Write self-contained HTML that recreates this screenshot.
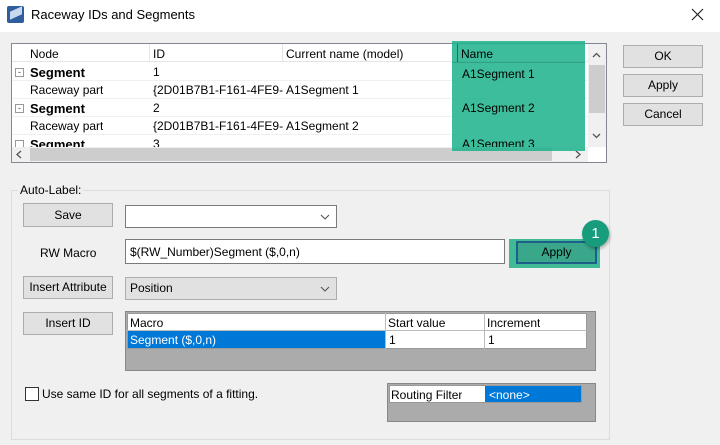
<!DOCTYPE html><html><head><meta charset="utf-8"><style>
*{box-sizing:border-box;margin:0;padding:0}
body{width:720px;height:445px;background:#f0f0f0;font-family:"Liberation Sans",sans-serif;font-size:12px;color:#000;position:relative;overflow:hidden}
.a{position:absolute}
.btn{position:absolute;background:#e1e1e1;border:1px solid #adadad;text-align:center;font-size:12px}
.cb{position:absolute;background:#e1e1e1;border:1px solid #adadad;padding-left:4px}
.cell{position:absolute;white-space:nowrap;overflow:hidden}
</style></head><body>
<div class="a" style="left:0;top:0;width:720px;height:32px;background:#fff"></div>
<div class="a" style="left:7px;top:6px;width:17px;height:17px;background:#2f5d9e;border-radius:2px"></div>
<div class="a" style="left:10px;top:9px;width:12px;height:8px;background:#c8d8ee;transform:skewY(-25deg)"></div>
<div class="a" style="left:31px;top:7px;font-size:13px">Raceway IDs and Segments</div>
<svg class="a" style="left:691px;top:8px" width="13" height="13"><path d="M1 1L12 12M12 1L1 12" stroke="#222" stroke-width="1.2"/></svg>

<!-- tree -->
<div class="a" style="left:11px;top:43px;width:596px;height:120px;background:#fff;border:1px solid #828790"></div>
<div class="a" style="left:12px;top:44px;width:576px;height:18px;background:#fff;border-bottom:1px solid #e5e5e5"></div>
<div class="cell" style="left:30px;top:47px">Node</div>
<div class="a" style="left:149px;top:44px;width:1px;height:18px;background:#e5e5e5"></div>
<div class="cell" style="left:153px;top:47px">ID</div>
<div class="a" style="left:282px;top:44px;width:1px;height:18px;background:#e5e5e5"></div>
<div class="cell" style="left:286px;top:47px">Current name (model)</div>

<div class="a" style="left:12px;top:80px;width:576px;height:1px;background:#f0f0f0"></div>
<div class="a" style="left:12px;top:98px;width:576px;height:1px;background:#f0f0f0"></div>
<div class="a" style="left:12px;top:116px;width:576px;height:1px;background:#f0f0f0"></div>
<div class="a" style="left:12px;top:134px;width:576px;height:1px;background:#f0f0f0"></div>

<div class="a" style="left:15px;top:68px;width:9px;height:9px;border:1px solid #999;font-size:9px;line-height:6px;text-align:center;color:#444">-</div>
<div class="cell" style="left:30px;top:65px;font-weight:bold;font-size:13px">Segment</div>
<div class="cell" style="left:153px;top:65px">1</div>
<div class="cell" style="left:30px;top:83px">Raceway part</div>
<div class="cell" style="left:153px;top:83px;width:130px">{2D01B7B1-F161-4FE9-</div>
<div class="cell" style="left:286px;top:83px">A1Segment 1</div>
<div class="a" style="left:15px;top:104px;width:9px;height:9px;border:1px solid #999;font-size:9px;line-height:6px;text-align:center;color:#444">-</div>
<div class="cell" style="left:30px;top:101px;font-weight:bold;font-size:13px">Segment</div>
<div class="cell" style="left:153px;top:101px">2</div>
<div class="cell" style="left:30px;top:119px">Raceway part</div>
<div class="cell" style="left:153px;top:119px;width:130px">{2D01B7B1-F161-4FE9-</div>
<div class="cell" style="left:286px;top:119px">A1Segment 2</div>
<div class="a" style="left:12px;top:136px;width:440px;height:11px;overflow:hidden">
 <div class="a" style="left:3px;top:4px;width:9px;height:9px;border:1px solid #999"></div>
 <div class="cell" style="left:18px;top:1px;font-weight:bold;font-size:13px">Segment</div>
 <div class="cell" style="left:141px;top:1px">3</div>
</div>
<!-- scrollbars -->
<div class="a" style="left:12px;top:147px;width:576px;height:15px;background:#f0f0f0"></div>
<div class="a" style="left:30px;top:148px;width:522px;height:13px;background:#cdcdcd"></div>
<svg class="a" style="left:15px;top:150px" width="8" height="9"><path d="M6 1L2 4.5L6 8" fill="none" stroke="#555" stroke-width="1.3"/></svg>
<svg class="a" style="left:574px;top:150px" width="8" height="9"><path d="M2 1L6 4.5L2 8" fill="none" stroke="#555" stroke-width="1.3"/></svg>
<div class="a" style="left:588px;top:44px;width:18px;height:103px;background:#f0f0f0"></div>
<div class="a" style="left:589px;top:65px;width:16px;height:48px;background:#cdcdcd"></div>
<svg class="a" style="left:592px;top:52px" width="9" height="6"><path d="M1 5L4.5 1.5L8 5" fill="none" stroke="#555" stroke-width="1.3"/></svg>
<svg class="a" style="left:592px;top:133px" width="9" height="6"><path d="M1 1L4.5 4.5L8 1" fill="none" stroke="#555" stroke-width="1.3"/></svg>
<!-- green overlay -->
<div class="a" style="left:452px;top:41px;width:133px;height:110px;background:rgba(27,177,137,0.85)"></div>
<div class="cell" style="left:461px;top:47px">Name</div>
<div class="a" style="left:457px;top:44px;width:1px;height:18px;background:#555"></div>
<div class="a" style="left:452px;top:62px;width:133px;height:1px;background:rgba(0,0,0,0.15)"></div>
<div class="cell" style="left:462px;top:67px">A1Segment 1</div>
<div class="cell" style="left:462px;top:101px">A1Segment 2</div>
<div class="a" style="left:452px;top:136px;width:133px;height:11px;overflow:hidden"><div class="cell" style="left:10px;top:1px">A1Segment 3</div></div>

<div class="btn" style="left:623px;top:45px;width:80px;height:23px;line-height:21px">OK</div>
<div class="btn" style="left:623px;top:74px;width:80px;height:23px;line-height:21px">Apply</div>
<div class="btn" style="left:623px;top:103px;width:80px;height:23px;line-height:21px">Cancel</div>

<!-- group -->
<div class="a" style="left:11px;top:190px;width:599px;height:250px;border:1px solid #dcdcdc"></div>
<div class="a" style="left:18px;top:183px;background:#f0f0f0;padding:0 2px">Auto-Label:</div>
<div class="btn" style="left:23px;top:203px;width:90px;height:24px;line-height:22px">Save</div>
<div class="a" style="left:125px;top:205px;width:212px;height:23px;background:#fff;border:1px solid #7a7a7a"></div>
<svg class="a" style="left:320px;top:214px" width="10" height="6"><path d="M1 1L5 5L9 1" fill="none" stroke="#555" stroke-width="1.1"/></svg>
<div class="a" style="left:40px;top:246px">RW Macro</div>
<div class="a" style="left:125px;top:239px;width:380px;height:25px;background:#fff;border:1px solid #7a7a7a;padding:5px 4px">$(RW_Number)Segment ($,0,n)</div>
<div class="a" style="left:509px;top:239px;width:91px;height:29px;background:#3fb996"></div>
<div class="a" style="left:516px;top:241px;width:81px;height:23px;border:2px solid #1d5f8a;background:#3aa68a;text-align:center;line-height:19px">Apply</div>
<div class="a" style="left:582px;top:220px;width:27px;height:27px;border-radius:50%;background:#179c7c;color:#fff;text-align:center;line-height:27px;font-size:15px;box-shadow:1px 2px 3px rgba(0,0,0,.3)">1</div>
<div class="btn" style="left:23px;top:276px;width:90px;height:23px;line-height:21px">Insert Attribute</div>
<div class="cb" style="left:125px;top:277px;width:212px;height:23px;line-height:21px">Position</div>
<svg class="a" style="left:320px;top:286px" width="10" height="6"><path d="M1 1L5 5L9 1" fill="none" stroke="#555" stroke-width="1.1"/></svg>
<div class="btn" style="left:23px;top:312px;width:90px;height:23px;line-height:21px">Insert ID</div>
<div class="a" style="left:125px;top:311px;width:471px;height:60px;background:#ababab;border:1px solid #888"></div>
<div class="a" style="left:127px;top:313px;width:460px;height:36px;background:#fff;border:1px solid #999"></div>
<div class="a" style="left:127px;top:330px;width:460px;height:1px;background:#bbb"></div>
<div class="cell" style="left:130px;top:316px">Macro</div>
<div class="a" style="left:385px;top:313px;width:1px;height:36px;background:#bbb"></div>
<div class="cell" style="left:388px;top:316px">Start value</div>
<div class="a" style="left:484px;top:313px;width:1px;height:36px;background:#bbb"></div>
<div class="cell" style="left:487px;top:316px">Increment</div>
<div class="a" style="left:128px;top:331px;width:257px;height:17px;background:#0078d7"></div>
<div class="cell" style="left:130px;top:333px;color:#fff">Segment ($,0,n)</div>
<div class="cell" style="left:389px;top:333px">1</div>
<div class="cell" style="left:488px;top:333px">1</div>

<div class="a" style="left:25px;top:387px;width:14px;height:14px;background:#fff;border:1px solid #333"></div>
<div class="a" style="left:42px;top:387px">Use same ID for all segments of a fitting.</div>

<div class="a" style="left:387px;top:383px;width:209px;height:39px;background:#ababab;border:1px solid #888"></div>
<div class="a" style="left:389px;top:385px;width:193px;height:18px;background:#fff;border:1px solid #999"></div>
<div class="cell" style="left:391px;top:388px">Routing Filter</div>
<div class="a" style="left:485px;top:386px;width:96px;height:16px;background:#0078d7"></div>
<div class="cell" style="left:489px;top:388px;color:#fff">&lt;none&gt;</div>
</body></html>
